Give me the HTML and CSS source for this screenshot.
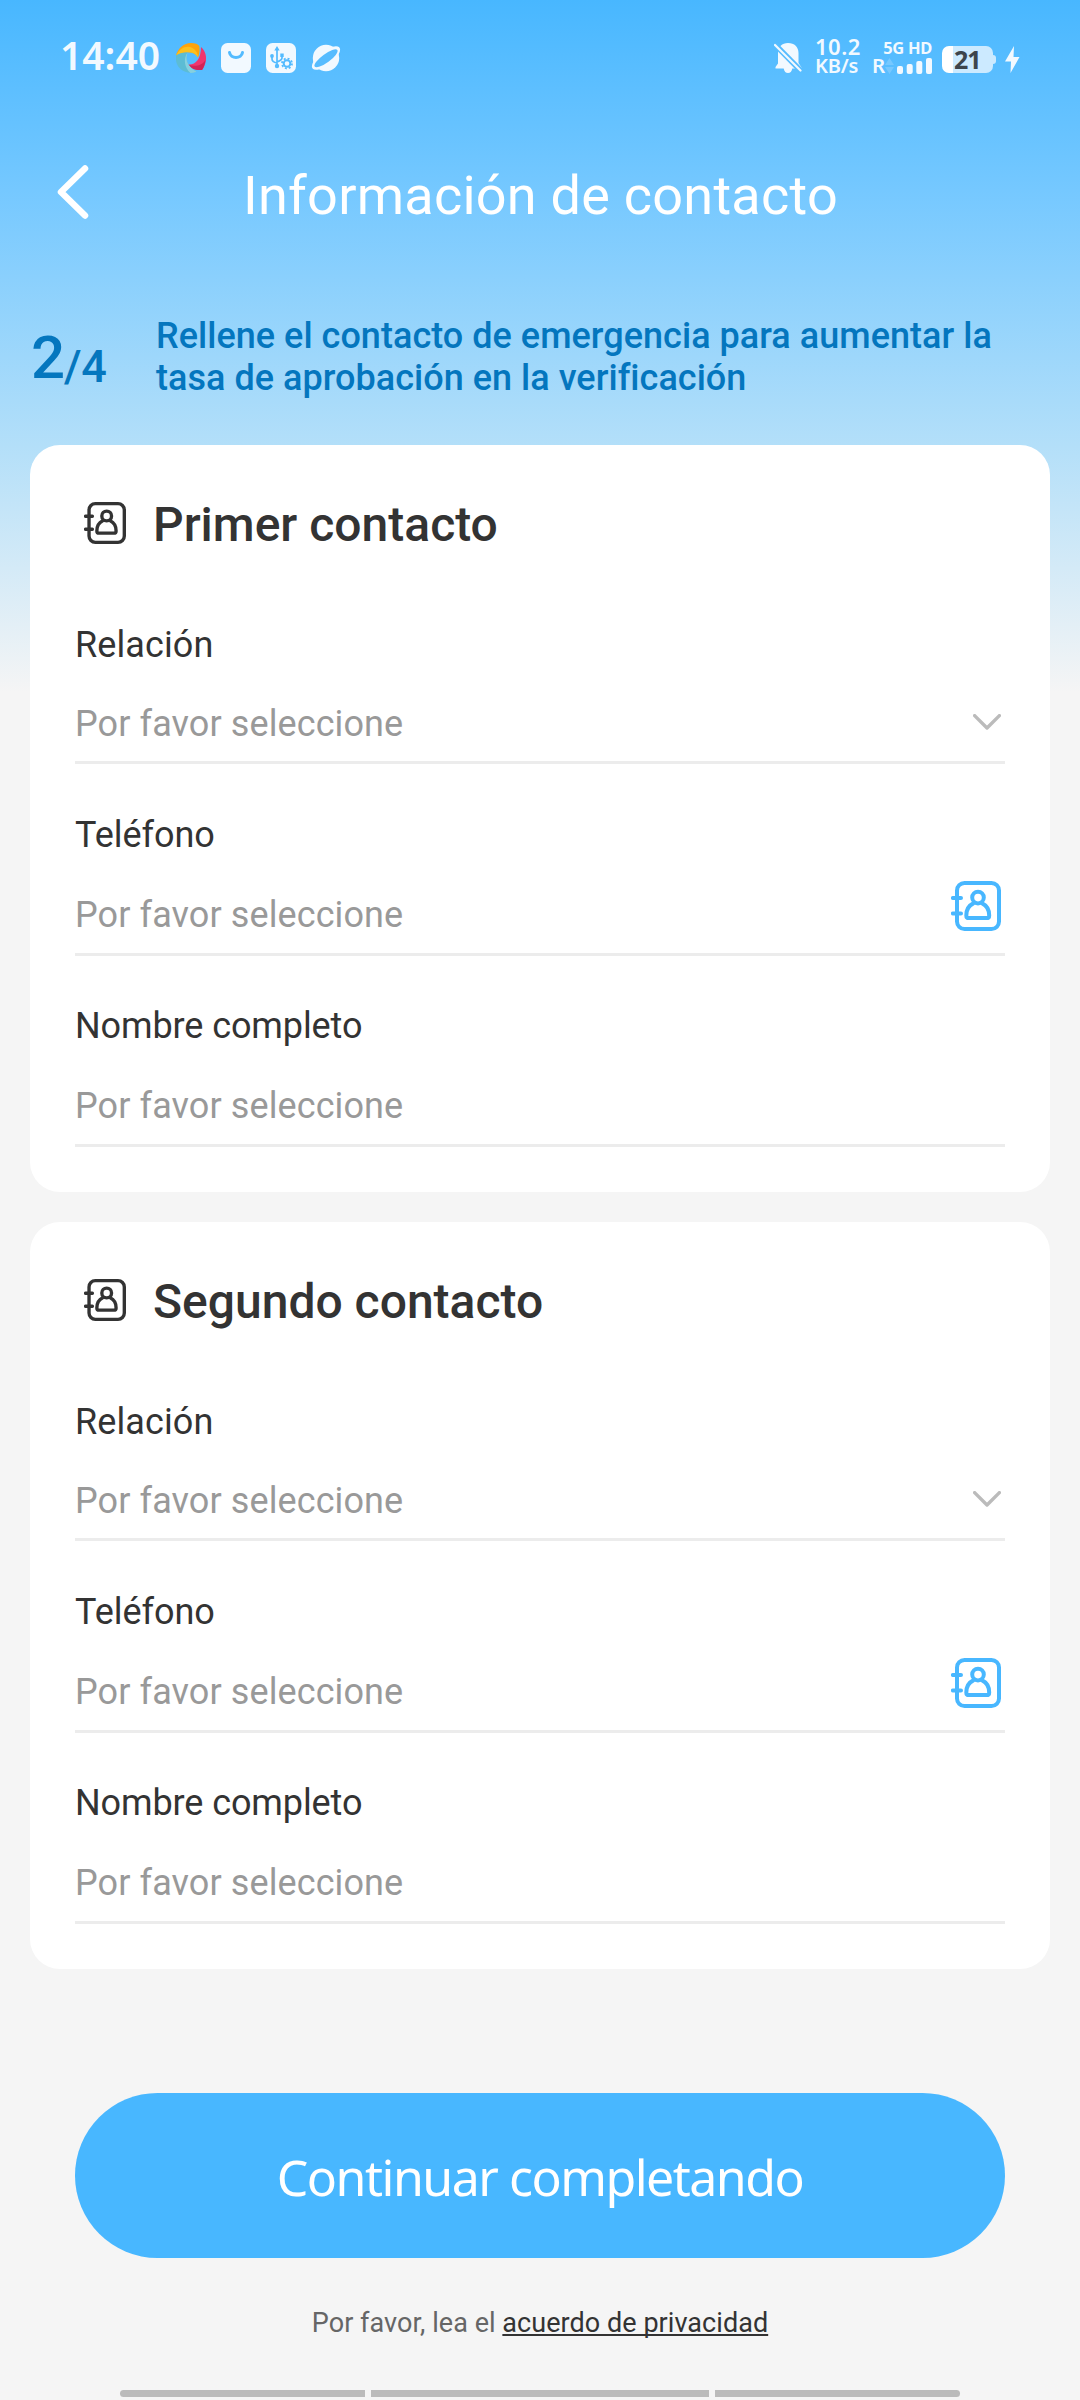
FILE: index.html
```
<!DOCTYPE html>
<html lang="es">
<head>
<meta charset="utf-8">
<title>Información de contacto</title>
<link rel="stylesheet" href="styles.css">
</head>
<body>
<svg class="defs" width="0" height="0" aria-hidden="true">
  <symbol id="contact" viewBox="0 0 50 50">
    <g fill="none" stroke="currentColor" stroke-width="4" stroke-linecap="round" stroke-linejoin="round">
      <rect x="6" y="2" width="42" height="46" rx="7.5"/>
      <path d="M1.9 17H10M1.9 32.4H10"/>
      <circle cx="27" cy="16.6" r="5.8"/>
      <path d="M22.3 22.4C18 24.5 15.3 29 15.3 34.4c0 1.700 1 2.700 2.700 2.700h17.500c1.700 0 2.700-1 2.700-2.700 0-5.400-2.700-9.900-7-12"/>
    </g>
  </symbol>
  <symbol id="chevron" viewBox="0 0 28 16">
    <path d="M1.600 1.600 14 14 26.400 1.600" fill="none" stroke="currentColor" stroke-width="3.400" stroke-linecap="round" stroke-linejoin="round"/>
  </symbol>
</svg>

<div class="screen">
  <div class="status">
    <span class="clock">14:40</span>
    <div class="notifs">
      <svg width="30" height="30" viewBox="0 0 30 30">
        <path d="M0 12.500C2 5 8 0 15 0c4 0 7 1 8.300 3 .7 4 .2 8-1.300 11.500C19 8.500 10 7.500 0 12.500z" fill="#ffa30b"/>
        <path d="M0 12.500C4 4.500 11 2 16.500 5c3.500 2 5.500 5.500 5.500 9.500C19 8.500 10 7.500 0 12.500z" fill="#fdc01d"/>
        <path d="M25 4c4.500 4 6 9.500 4.500 15.500-.8 3-2 5.500-3.500 7.500-6 .5-11-1-14-5.500 7 1 13-5 13-17.500z" fill="#f0366f"/>
        <path d="M29.500 17c-3 5-10 7.500-17.500 4.500 3 4.500 8 6 14 5.500 1.500-2 3-6 3.500-10z" fill="#d22458"/>
        <path d="M0 12.500c3.500-2.500 7.500-3.500 11.500-3-2.500 7 0 14.500 9 19C10 33-2 25 0 12.500z" fill="#5cbcd4"/>
        <path d="M11.500 9.500c-2.500 7 0 14.500 9 19-2 1-4 1.500-6 1.500-6-5-7.500-14-3-20.500z" fill="#86d0df"/>
      </svg>
      <svg width="30" height="30" viewBox="0 0 30 30">
        <rect width="30" height="30" rx="6.500" fill="#f2f9ff"/>
        <path d="M8.500 9.500c1 6.500 12 6.500 13 0" fill="none" stroke="#53bbff" stroke-width="3" stroke-linecap="round"/>
      </svg>
      <svg width="30" height="30" viewBox="0 0 30 30">
        <rect width="30" height="30" rx="6.500" fill="#f2f9ff"/>
        <g fill="none" stroke="#53bbff" stroke-width="1.700">
          <path d="M11 6v17M6 13v3q0 3 5 4M16 12v3q0 2-5 4"/>
          <circle cx="21" cy="20.500" r="3.300" stroke-width="2"/>
          <circle cx="21" cy="20.500" r="5" stroke-width="1.800" stroke-dasharray="1.960 1.960"/>
        </g>
        <g fill="#53bbff"><path d="M11 3l2.700 4.500H8.300zM14.300 10.500h3.400v3.400h-3.400z"/><circle cx="6" cy="13" r="1.900"/><circle cx="11" cy="23" r="2.200"/></g>
      </svg>
      <svg width="30" height="28" viewBox="0 0 30 28">
        <circle cx="15" cy="14" r="13.200" fill="#f2f9ff"/>
        <ellipse cx="15" cy="14" rx="17" ry="7" transform="rotate(-38 15 14)" fill="#f2f9ff"/>
        <ellipse cx="15" cy="14.300" rx="14" ry="4.200" transform="rotate(-36 15 14.300)" fill="#56bcff"/>
      </svg>
    </div>
    <div class="system">
      <svg class="bell" width="28" height="30" viewBox="0 0 28 30">
        <path d="M14 0c6.500 0 10.500 4 10.500 10v10l3 4.500v1H18.300c-.6 3-2 4.500-4.300 4.500s-3.700-1.500-4.300-4.500H1.500v-1.500L4 20.500V10C4 4 8 0 14 0z" fill="#f2f9ff"/>
        <path d="M0 0.500 27 28" stroke="#56bcff" stroke-width="5.500"/>
        <path d="M1 2 26.500 27.500" stroke="#f2f9ff" stroke-width="2.200" stroke-linecap="round"/>
      </svg>
      <div class="speed"><span class="rate">10.2</span><span class="unit">KB/s</span></div>
      <div class="cell">
        <span class="net">5G HD</span>
        <div class="signal">
          <span class="roam">R</span>
          <svg width="9" height="16" viewBox="0 0 9 16"><path d="M0 7 4.500 0 9 7zM0 9h9l-4.500 7z" fill="#76c8ff"/></svg>
          <svg class="bars" width="35" height="16" viewBox="0 0 35 16" fill="#f2f9ff"><rect y="8" width="6" height="8" rx="2"/><rect x="9.700" y="6" width="6" height="10" rx="2"/><rect x="19.300" y="3" width="6" height="13" rx="2"/><rect x="29" width="6" height="16" rx="2"/></svg>
        </div>
      </div>
      <div class="battery"><span>21</span></div>
      <svg class="bolt" width="15" height="27" viewBox="0 0 15 27"><path d="M9 0 0 15.500h6L5.500 27 14.500 11H8.500z" fill="#f2f9ff"/></svg>
    </div>
  </div>

  <header class="header">
    <svg class="back" width="32" height="54" viewBox="0 0 32 54"><path d="M28 3.500 4 27 28 50.500" fill="none" stroke="#fff" stroke-width="6.500" stroke-linecap="round" stroke-linejoin="round"/></svg>
    <h1>Información de contacto</h1>
  </header>

  <div class="progress">
    <div class="step"><span class="current">2</span><span class="total">/4</span></div>
    <p>Rellene el contacto de emergencia para aumentar la tasa de aprobación en la verificación</p>
  </div>

  <main class="cards">
    <section class="card">
      <h2><svg><use href="#contact"/></svg>Primer contacto</h2>
      <div class="field select"><label>Relación</label><div class="value">Por favor seleccione<svg class="chevron"><use href="#chevron"/></svg></div></div>
      <div class="field"><label>Teléfono</label><div class="value">Por favor seleccione<svg class="pick"><use href="#contact"/></svg></div></div>
      <div class="field name"><label>Nombre completo</label><div class="value">Por favor seleccione</div></div>
    </section>
    <section class="card">
      <h2><svg><use href="#contact"/></svg>Segundo contacto</h2>
      <div class="field select"><label>Relación</label><div class="value">Por favor seleccione<svg class="chevron"><use href="#chevron"/></svg></div></div>
      <div class="field"><label>Teléfono</label><div class="value">Por favor seleccione<svg class="pick"><use href="#contact"/></svg></div></div>
      <div class="field name"><label>Nombre completo</label><div class="value">Por favor seleccione</div></div>
    </section>
  </main>

  <button class="submit">Continuar completando</button>
  <p class="legal">Por favor, lea el <a>acuerdo de privacidad</a></p>
  <div class="navbar"><i></i><i></i><i></i></div>
</div>
</body>
</html>
```

FILE: styles.css
```
* { box-sizing: border-box; }
body, h1, h2, p { margin: 0; }
body { font-family: Roboto, sans-serif; background: #f5f5f5; color: #333; }
svg { flex: none; display: block; }
.defs { position: absolute; }

.screen {
  width: 1080px;
  height: 2400px;
  overflow: hidden;
  display: flex;
  flex-direction: column;
  background: linear-gradient(#48b7ff 0, #75c8ff 190px, #b3dff9 445px, #f5f5f5 692px);
}

/* Status bar */
.status {
  height: 105px;
  flex: none;
  display: flex;
  align-items: flex-start;
  padding: 0 60px;
  font-family: "Noto Sans", sans-serif;
  color: #f2f9ff;
}
.clock { width: 116px; margin-top: 35px; font-size: 39px; line-height: 40px; font-weight: 600; }
.notifs { display: flex; align-items: center; gap: 15px; margin-top: 43px; }
.system { display: flex; align-items: flex-start; margin-left: auto; }
.bell { margin: 43px 13px 0 0; }
.speed { display: flex; flex-direction: column; width: 57px; margin-top: 35px; font-weight: 600; }
.rate { font-size: 22px; line-height: 22px; letter-spacing: 0.5px; }
.unit { font-size: 20px; line-height: 18px; letter-spacing: -0.2px; }
.cell { width: 60px; margin: 39px 10px 0 0; }
.net { display: block; text-align: right; font-size: 16.500px; line-height: 17px; font-weight: 700; letter-spacing: -0.3px; }
.signal { display: flex; height: 18px; align-items: flex-end; }
.signal .roam { width: 13px; font-size: 20.500px; line-height: 17px; font-weight: 600; }
.bars { margin-left: 3px; }
.battery {
  position: relative;
  width: 51px;
  height: 27px;
  margin: 46px 12px 0 0;
  padding-left: 12px;
  border-radius: 7px;
  background: linear-gradient(90deg, #fff 11px, #cceaff 11px);
  color: #3d454c;
  font-size: 25px;
  line-height: 27px;
  font-weight: 700;
  letter-spacing: -1px;
}
.battery::after { content: ""; position: absolute; left: 51px; top: 9px; width: 3px; height: 9px; border-radius: 0 3px 3px 0; background: #cceaff; }
.bolt { margin-top: 46px; }

/* Title bar */
.header { height: 181px; flex: none; display: flex; align-items: center; padding: 0 57px; }
.header h1 { flex: 1; margin-right: 31px; text-align: center; font-size: 54px; line-height: 64px; font-weight: 400; letter-spacing: 0.25px; color: #fff; }
.back { margin-top: -8px; }

/* Step and hint */
.progress { height: 159px; flex: none; display: flex; padding: 29px 60px 0 31px; color: #0476be; font-weight: 500; }
.step { width: 125px; display: flex; }
.current { font-size: 60px; line-height: 60px; margin-top: 13px; }
.total { font-size: 45px; line-height: 46px; margin: 29px 0 0 -1px; letter-spacing: -0.3px; }
.progress p { flex: 1; font-size: 36px; line-height: 42px; letter-spacing: 0.03px; }

/* Contact cards */
.cards { display: flex; flex-direction: column; gap: 30px; padding: 0 30px; }
.card { padding: 50px 45px 45px; border-radius: 30px; background: #fff; }
.card h2 { display: flex; align-items: center; gap: 27px; height: 59px; margin: 0 0 20px; padding-left: 9px; font-size: 48px; line-height: 59px; font-weight: 500; }
.card h2 svg { width: 42px; height: 42px; margin-top: -3px; }
.field { height: 192px; padding-top: 50px; border-bottom: 3px solid #ececec; font-size: 36px; line-height: 42px; }
.field label { display: block; margin-bottom: 38px; letter-spacing: -0.05px; }
.field.select { height: 190px; }
.field.select label { margin-bottom: 37px; letter-spacing: 0.1px; }
.field.name { height: 191px; padding-top: 49px; }
.field.name label { letter-spacing: -0.1px; }
.value { height: 42px; display: flex; align-items: center; justify-content: space-between; padding-right: 4px; color: #999; letter-spacing: 0.1px; }
.chevron { width: 28px; height: 16px; margin-top: -4px; color: #bbb; }
.pick { width: 50px; height: 50px; margin-top: -18px; color: #48b7ff; }

/* Bottom actions */
.submit { flex: none; height: 165px; margin: 124px 75px 0; padding: 3px 0 0; border: 0; border-radius: 83px; background: #48b7ff; color: #fff; font: 400 50px "Noto Sans", sans-serif; letter-spacing: -1.5px; }
.legal { margin-top: 49px; text-align: center; font-size: 27px; line-height: 32px; letter-spacing: 0.05px; color: #666; }
.legal a { color: #333; text-decoration: underline; text-decoration-thickness: 1.500px; text-underline-offset: 2px; text-decoration-skip-ink: none; }
.navbar { display: grid; grid-template-columns: 245px 338px 245px; gap: 6px; justify-content: center; margin-top: 51px; }
.navbar i { height: 7px; background: #bbb; }
.navbar i:first-child { border-radius: 4px 0 0 4px; }
.navbar i:last-child { border-radius: 0 4px 4px 0; }
```
